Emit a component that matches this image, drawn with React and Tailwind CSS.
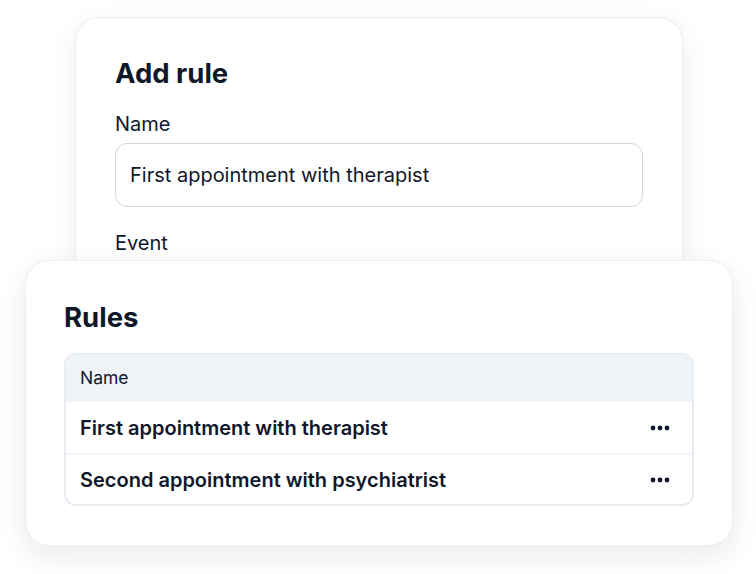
const font = { fontFamily: "Inter, 'Noto Sans', sans-serif" };

function Dots() {
  return (
    <svg width="20" height="6" viewBox="0 0 20 6" className="text-slate-900">
      <circle cx="3" cy="3" r="2.4" fill="currentColor" />
      <circle cx="10" cy="3" r="2.4" fill="currentColor" />
      <circle cx="17" cy="3" r="2.4" fill="currentColor" />
    </svg>
  );
}

const rules = ["First appointment with therapist", "Second appointment with psychiatrist"];

export default function App() {
  return (
    <div className="h-[574px] w-[756px] overflow-hidden bg-white" style={font}>
      <div className="flex flex-col pt-[17px]">
        <div className="ml-[75px] h-[320px] w-[608px] rounded-[24px] border border-slate-200/70 bg-white px-[39px] pt-[39px] shadow-[0_8px_30px_rgba(15,23,42,0.07)]">
          <h2 className="text-[27.5px] font-bold leading-8 text-slate-900">Add rule</h2>
          <label className="mt-[21px] block">
            <span className="block text-[20px] leading-7 text-slate-900">Name</span>
            <div className="mt-[5px] flex h-16 items-center rounded-xl border border-slate-300 bg-white px-[14px] text-[20px] text-slate-900">
              First appointment with therapist
            </div>
          </label>
          <div className="mt-[22px] text-[20px] leading-7 text-slate-900">Event</div>
        </div>

        <div className="relative z-10 -mt-[77px] ml-[25px] w-[708px] rounded-[24px] border border-slate-200/70 bg-white px-[38px] pb-[39px] pt-10 shadow-[0_10px_30px_rgba(15,23,42,0.09)]">
          <h2 className="text-[27.5px] font-bold leading-8 text-slate-900">Rules</h2>
          <div className="mt-[20px] overflow-hidden rounded-xl border-2 border-slate-200/80">
            <div className="flex h-[47px] items-center bg-[#f0f3f8] px-[14px] text-[17.5px] text-slate-900">Name</div>
            {rules.map((r, i) => (
              <div
                key={r}
                className={
                  "flex h-[51px] items-center justify-between pl-[14px] pr-[22px] text-[20px] font-semibold text-slate-900" +
                  (i > 0 ? " border-t-2 border-slate-100" : "")
                }
              >
                <span>{r}</span>
                <Dots />
              </div>
            ))}
          </div>
        </div>
      </div>
    </div>
  );
}
